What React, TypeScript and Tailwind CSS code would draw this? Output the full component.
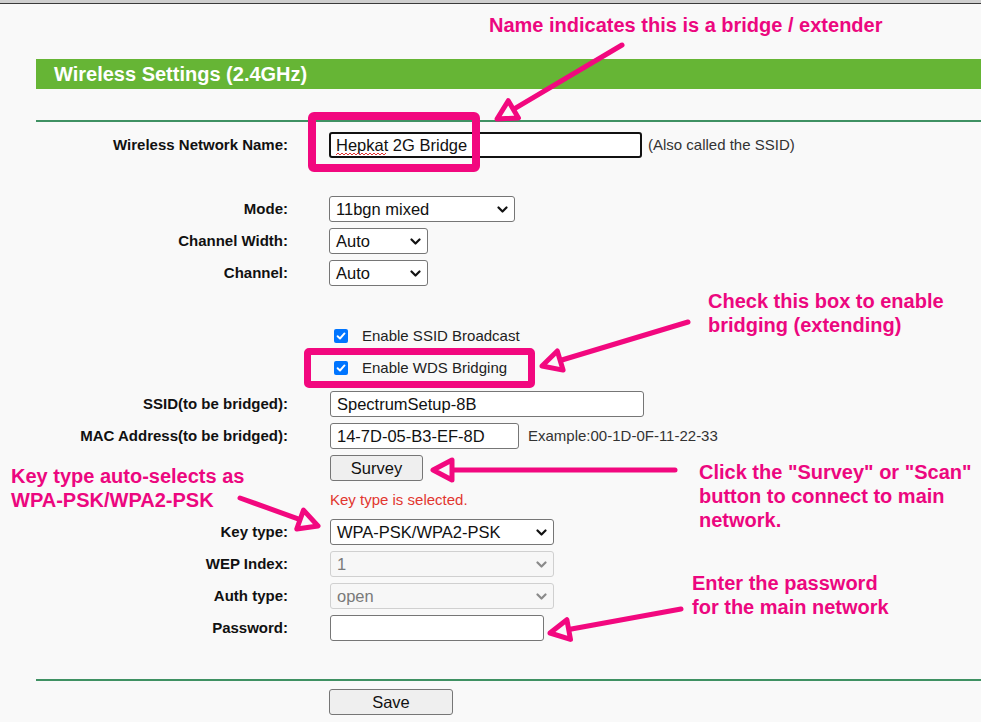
import type { ReactNode } from "react"
import clsx from "clsx"

const PINK = "#f2087f"

function Chevron({ disabled }: { disabled?: boolean }) {
  return (
    <svg width="11" height="7" viewBox="0 0 11 7" className="shrink-0">
      <polyline
        points="1.5,1.5 5.5,5.5 9.5,1.5"
        fill="none"
        stroke={disabled ? "#8a8a8a" : "#111"}
        strokeWidth="2.2"
        strokeLinecap="round"
        strokeLinejoin="round"
      />
    </svg>
  )
}

function Select({ value, className, disabled }: { value: string; className: string; disabled?: boolean }) {
  return (
    <div
      className={clsx(
        "flex h-[26px] items-center justify-between rounded-[3px] border pl-[6px] pr-[6px] text-[16.5px] leading-none",
        disabled ? "border-[#d0d0d0] bg-[#f7f7f7] text-[#7a7a7a]" : "border-[#767676] bg-white text-[#111]",
        className
      )}
    >
      <span>{value}</span>
      <Chevron disabled={disabled} />
    </div>
  )
}

function TextBox({ value, className }: { value?: string; className: string }) {
  return (
    <div
      className={clsx(
        "flex h-[26px] items-center rounded-[3px] border border-[#767676] bg-white pl-[6px] text-[16.5px] leading-none text-[#111]",
        className
      )}
    >
      {value}
    </div>
  )
}

function Checkbox() {
  return (
    <span className="flex h-[14px] w-[14px] items-center justify-center rounded-[2px] bg-[#0075ff]">
      <svg width="10" height="10" viewBox="0 0 10 10">
        <polyline points="1.6,5.2 4,7.5 8.5,2.4" fill="none" stroke="#fff" strokeWidth="1.9" strokeLinecap="round" strokeLinejoin="round" />
      </svg>
    </span>
  )
}

function Row({ label, children, className }: { label?: string; children?: ReactNode; className?: string }) {
  return (
    <div className={clsx("flex h-8 items-center", className)}>
      <div className="w-[252px] text-right text-[15px] font-bold text-[#111]">{label}</div>
      <div className="ml-[41px] flex items-center">{children}</div>
    </div>
  )
}

// arrow from tail to tip with an open triangle head
function Arrow({ tail, tip }: { tail: [number, number]; tip: [number, number] }) {
  const dx = tip[0] - tail[0]
  const dy = tip[1] - tail[1]
  const len = Math.hypot(dx, dy)
  const ux = dx / len
  const uy = dy / len
  const L = 19
  const W = 10
  const bx = tip[0] - ux * L
  const by = tip[1] - uy * L
  const p1 = `${bx - uy * W},${by + ux * W}`
  const p2 = `${bx + uy * W},${by - ux * W}`
  return (
    <g>
      <line x1={tail[0]} y1={tail[1]} x2={bx} y2={by} stroke={PINK} strokeWidth="5" strokeLinecap="round" />
      <polygon points={`${tip[0]},${tip[1]} ${p1} ${p2}`} fill="#f9f9f9" stroke={PINK} strokeWidth="5" strokeLinejoin="round" />
    </g>
  )
}

function Note({ children, className }: { children: ReactNode; className: string }) {
  return (
    <div className={clsx("absolute text-[20px] font-bold leading-[24px] text-[#ec077f]", className)}>{children}</div>
  )
}

export default function App() {
  return (
    <div className="relative h-[722px] w-[981px] overflow-hidden bg-[#f9f9f9] font-['Liberation_Sans',Arial,sans-serif]">
      <div className="h-[3px] bg-[#cfcfcf]" />
      <div className="h-[1px] bg-[#3a3a3a]" />

      <div className="ml-[36px]">
        <div className="mt-[55px] flex h-[30px] items-center bg-[#66b535] pl-[18px] text-[20px] font-bold text-white">
          Wireless Settings (2.4GHz)
        </div>
        <div className="mt-[31px] h-[2px] bg-[#3f9163]" />

        <Row label="Wireless Network Name:" className="mt-[7px]">
          <div className="flex h-[26px] w-[313px] items-center rounded-[3px] border-2 border-[#111] bg-white pl-[5px] text-[16.5px] leading-none text-[#111]">
            <span className="relative">
              Hepkat
              <svg className="absolute left-0 top-[15px]" width="50" height="4" viewBox="0 0 50 4">
                <polyline
                  points="0,3 2,1 4,3 6,1 8,3 10,1 12,3 14,1 16,3 18,1 20,3 22,1 24,3 26,1 28,3 30,1 32,3 34,1 36,3 38,1 40,3 42,1 44,3 46,1 48,3 50,1"
                  fill="none"
                  stroke="#e03030"
                  strokeWidth="1"
                />
              </svg>
            </span>
            <span>&nbsp;2G Bridge</span>
          </div>
          <span className="ml-[6px] text-[15px] text-[#333]">(Also called the SSID)</span>
        </Row>

        <Row label="Mode:" className="mt-8">
          <Select value="11bgn mixed" className="w-[186px]" />
        </Row>
        <Row label="Channel Width:">
          <Select value="Auto" className="w-[99px]" />
        </Row>
        <Row label="Channel:">
          <Select value="Auto" className="w-[99px]" />
        </Row>

        <Row className="mt-[31px]">
          <div className="ml-[5px] flex items-center gap-[14px] text-[15px] text-[#222]">
            <Checkbox />
            <span>Enable SSID Broadcast</span>
          </div>
        </Row>
        <Row>
          <div className="ml-[5px] flex items-center gap-[14px] text-[15px] text-[#222]">
            <Checkbox />
            <span>Enable WDS Bridging</span>
          </div>
        </Row>

        <Row label="SSID(to be bridged):" className="mt-1">
          <TextBox value="SpectrumSetup-8B" className="ml-px w-[314px]" />
        </Row>
        <Row label="MAC Address(to be bridged):">
          <TextBox value="14-7D-05-B3-EF-8D" className="ml-px w-[189px]" />
          <span className="ml-[9px] text-[15px] text-[#333]">Example:00-1D-0F-11-22-33</span>
        </Row>
        <Row>
          <div className="ml-px flex h-[26px] w-[93px] items-center justify-center rounded-[3px] border border-[#767676] bg-[#efefef] text-[16.5px] text-[#111]">
            Survey
          </div>
        </Row>
        <Row>
          <span className="ml-px text-[15px] text-[#e2362f]">Key type is selected.</span>
        </Row>
        <Row label="Key type:">
          <Select value="WPA-PSK/WPA2-PSK" className="ml-px w-[224px]" />
        </Row>
        <Row label="WEP Index:">
          <Select value="1" className="ml-px w-[224px]" disabled />
        </Row>
        <Row label="Auth type:">
          <Select value="open" className="ml-px w-[224px]" disabled />
        </Row>
        <Row label="Password:">
          <TextBox className="ml-px w-[214px]" />
        </Row>

        <div className="mt-[35px] h-[2px] bg-[#3f9163]" />
        <div className="ml-[293px] mt-[8px] flex h-[26px] w-[124px] items-center justify-center rounded-[3px] border border-[#767676] bg-[#efefef] text-[16.5px] text-[#111]">
          Save
        </div>
      </div>

      {/* annotation layer */}
      <div className="absolute left-[308px] top-[112px] h-[60px] w-[172px] rounded-[6px] border-[8px] border-[#f2087f]" />
      <div className="absolute left-[304px] top-[348px] h-[40px] w-[231px] rounded-[5px] border-[7px] border-[#f2087f]" />

      <svg className="pointer-events-none absolute left-0 top-0" width="981" height="722">
        <Arrow tail={[622, 45]} tip={[497, 119]} />
        <Arrow tail={[688, 322]} tip={[542, 366]} />
        <Arrow tail={[675, 470]} tip={[433, 470]} />
        <Arrow tail={[240, 498]} tip={[318, 526]} />
        <Arrow tail={[681, 609]} tip={[550, 633]} />
      </svg>

      <Note className="left-[489px] top-[13px]">Name indicates this is a bridge / extender</Note>
      <Note className="left-[708px] top-[289px]">
        Check this box to enable
        <br />
        bridging (extending)
      </Note>
      <Note className="left-[699px] top-[460px]">
        Click the "Survey" or "Scan"
        <br />
        button to connect to main
        <br />
        network.
      </Note>
      <Note className="left-[11px] top-[464px]">
        Key type auto-selects as
        <br />
        WPA-PSK/WPA2-PSK
      </Note>
      <Note className="left-[692px] top-[571px]">
        Enter the password
        <br />
        for the main network
      </Note>
    </div>
  )
}
